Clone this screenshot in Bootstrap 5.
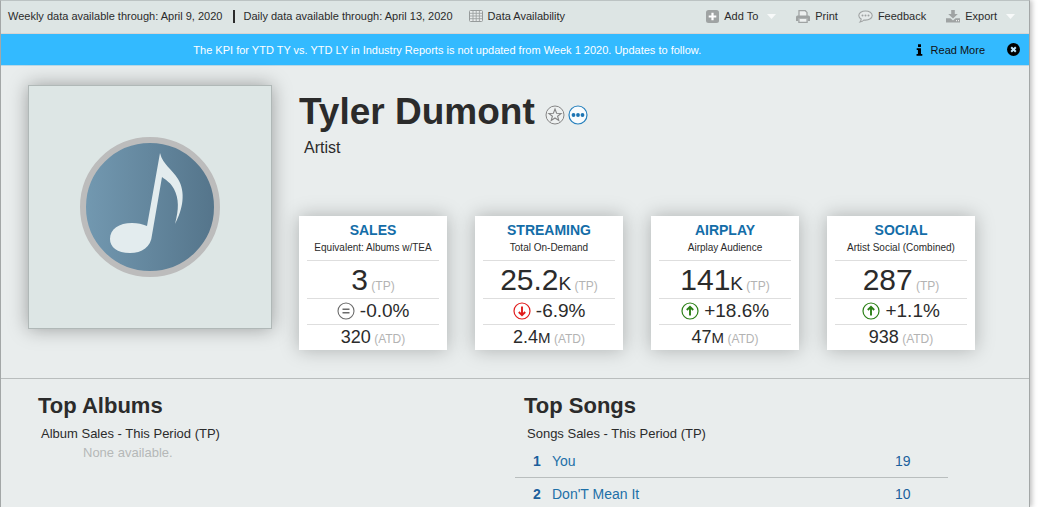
<!DOCTYPE html>
<html lang="en">
<head>
<meta charset="utf-8">
<meta name="viewport" content="width=device-width, initial-scale=1">
<title>Tyler Dumont – Artist</title>
<link href="https://cdn.jsdelivr.net/npm/bootstrap@5.3.0/dist/css/bootstrap.min.css" rel="stylesheet">
<style>
body{font-family:"Liberation Sans",Arial,sans-serif;font-size:11px;line-height:16px;color:#2b2b2b;background:#fff}
button{background:none;border:0;padding:0;color:inherit}
a{text-decoration:none}
.panel{margin-right:19px;background:#e9eded;border:1px solid #a3a7a7;border-top-color:#bcc3c3;border-bottom:0;box-shadow:2px 0 5px rgba(0,0,0,.25)}
.topbar{height:33px;padding:0 14px 2px 7px;background:#dde5e4;border-bottom:1px solid #d8d4d2}
.topbar nav{gap:20px}
.topbar .divide{width:2px;height:13px;background:#2b2b2b;margin:0 8px 0 11px}
.topbar .avail{margin-left:16px}
.tool{display:flex;align-items:center;gap:5px}
.caret{width:9px;height:5px;margin-left:4px}
.notice{height:32px;background:#33baff;border-bottom:1px solid #b9d8e6;color:#fff}
.notice .note{padding-right:22px}
.notice .tool{color:#111;gap:8px}
.closer{margin:0 9px 0 22px}
.hero{padding:19px 54px 28px 27px;gap:27px;border-bottom:1px solid #b9bdbd}
.cover{width:244px;height:244px;background:#dde6e5;border:1px solid #b0b8b7;box-shadow:0 0 18px rgba(0,0,0,.34)}
.title-row{padding-top:5px;gap:3px}
.artist-name{font-size:37px;line-height:44px;font-weight:700;margin:0}
.fav,.more{margin-top:6px}
.fav{margin-left:7px}
.kind{margin-top:4px;font-size:16px;line-height:20px;padding-left:5px}
.stats{display:grid;grid-template-columns:repeat(4,1fr);gap:28px;margin-top:58px}
.stat{background:#fff;padding:6px 8px 0;text-align:center;box-shadow:0 0 18px rgba(0,0,0,.26)}
.stat svg{vertical-align:-3px}
.stat h2{font-size:14px;line-height:16px;font-weight:700;color:#146da8;margin:0}
.stat .sub{font-size:10px;line-height:20px;height:22px;white-space:nowrap}
.stat .fig{border-top:1px solid #dedede;white-space:nowrap}
.stat .big{font-size:30px;line-height:37px;height:38px}
.stat .big small{font-size:19px}
.stat .mid{font-size:19px;line-height:24px;height:26px}
.stat .low{font-size:18px;line-height:24px;height:26px}
.stat .low small{font-size:15px}
.stat .tag{font-size:12px;color:#b3b3b3}
.lists{padding-top:13px}
.albums{padding-left:37px}
.songs-head{padding-left:9px}
.list-title{font-size:22px;line-height:28px;font-weight:700;margin:0}
.list-sub{font-size:13px;line-height:18px;margin-top:5px;padding-left:3px}
.none{font-size:13px;line-height:20px;color:#b5b8b8;padding-left:45px}
.songs{width:calc(100% - 81px);margin-top:2px;font-size:14px;line-height:18px;color:#1b5f9c}
.songs td{padding:7px 0}
.songs tr+tr td{border-top:1px solid #b9bebe;padding:7px 0 3px}
.songs td:first-child{width:37px;padding-left:18px;font-weight:700}
.songs td:last-child{width:53px}
.songs a{color:#1d70a8}
</style>
<script src="https://cdn.jsdelivr.net/npm/bootstrap@5.3.0/dist/js/bootstrap.bundle.min.js"></script>
</head>
<body>
<svg width="0" height="0" class="position-absolute" aria-hidden="true">
<symbol id="up" viewBox="0 0 18 18"><circle cx="9" cy="9" r="8" fill="none" stroke="#2c8017" stroke-width="1.2"/><path d="M9 13.5V5M5.8 8 9 4.8 12.2 8" fill="none" stroke="#2c8017" stroke-width="1.9"/></symbol>
<symbol id="down" viewBox="0 0 18 18"><circle cx="9" cy="9" r="8" fill="none" stroke="#e11b1b" stroke-width="1.2"/><path d="M9 4.5V13M5.8 10 9 13.2 12.2 10" fill="none" stroke="#e11b1b" stroke-width="1.9"/></symbol>
<symbol id="same" viewBox="0 0 18 18"><circle cx="9" cy="9" r="8" fill="none" stroke="#6b6b6b" stroke-width="1.1"/><path d="M5.5 7.2h7M5.5 10.7h7" stroke="#6b6b6b" stroke-width="1.5"/></symbol>
</svg>
<div class="panel min-vh-100">
  <header class="topbar d-flex align-items-center justify-content-between">
    <div class="d-flex align-items-center">
      <span>Weekly data available through: April 9, 2020</span>
      <span class="divide"></span>
      <span>Daily data available through: April 13, 2020</span>
      <a href="#" class="tool text-reset avail">
        <svg width="14" height="12" viewBox="0 0 14 12"><rect x=".5" y=".5" width="13" height="11" rx="1" fill="#e8ecec" stroke="#969b9b"/><path d="M1 3.3h12M1 6h12M1 8.7h12M4 1v10M7.2 1v10M10.4 1v10" stroke="#9da2a2" stroke-width=".9"/></svg>
        Data Availability</a>
    </div>
    <nav class="d-flex align-items-center">
      <button class="tool"><svg width="13" height="13" viewBox="0 0 13 13"><rect width="13" height="13" rx="2.5" fill="#9fa3a3"/><path d="M6.5 2.7v7.6M2.7 6.5h7.6" stroke="#fff" stroke-width="2.2"/></svg>Add To<svg class="caret" viewBox="0 0 9 5"><path d="M0 0h9L4.5 5z" fill="#f7f9f9"/></svg></button>
      <button class="tool"><svg width="14" height="13" viewBox="0 0 14 13"><path d="M3 6V.7h6.3L11 2.4V6" fill="#edf0f0" stroke="#9fa3a3" stroke-width="1.3"/><path d="M1.500 5.500h11q1.500 0 1.500 1.500v4h-2.200V8.800H2.200V11H0V7q0-1.500 1.500-1.500z" fill="#9fa3a3"/><path d="M2.900 9v3.300h8.200V9" fill="#edf0f0" stroke="#9fa3a3" stroke-width="1.3"/></svg>Print</button>
      <button class="tool"><svg width="15" height="13" viewBox="0 0 15 13"><path d="M7.500 1C3.800 1 .8 3 .8 5.500c0 1.500.9 2.700 2.400 3.500 0 1.200-.5 2.200-1.200 3 1.800-.2 3-.9 3.800-2 .5.100 1.100.1 1.700.1 3.700 0 6.700-2 6.700-4.600S11.200 1 7.500 1z" fill="#e6eaea" stroke="#9fa3a3" stroke-width="1.1"/><g fill="#9fa3a3"><circle cx="4.500" cy="5.500" r="1"/><circle cx="7.500" cy="5.500" r="1"/><circle cx="10.500" cy="5.500" r="1"/></g></svg>Feedback</button>
      <button class="tool"><svg width="14" height="13" viewBox="0 0 14 13"><path d="M5.200 0h3.600v4h3L7 8.600 2.200 4h3z" fill="#9fa3a3"/><path d="M0 8.300h4.500L7 10.500l2.500-2.200H14V12.500H0z" fill="#9fa3a3"/><path d="M10 10.700h1M12 10.700h1" stroke="#fff" stroke-width="1"/></svg>Export<svg class="caret" viewBox="0 0 9 5"><path d="M0 0h9L4.500 5z" fill="#f7f9f9"/></svg></button>
    </nav>
  </header>
  <div class="notice d-flex align-items-center">
    <div class="flex-grow-1 text-center note">The KPI for YTD TY vs. YTD LY in Industry Reports is not updated from Week 1 2020. Updates to follow.</div>
    <a href="#" class="tool"><svg width="7" height="12" viewBox="0 0 8 13"><path d="M2.300 0h3.400v3H2.300zM.8 4.500h4.900V11h1.500v2H.6v-2h1.600V6.500H.8z" fill="#000"/></svg>Read More</a>
    <button class="closer" aria-label="Close"><svg class="d-block" width="13" height="13" viewBox="0 0 13 13"><circle cx="6.500" cy="6.500" r="6.500" fill="#000"/><path d="M4.200 4.200l4.600 4.600M8.800 4.200L4.200 8.800" stroke="#bfe8ff" stroke-width="2"/></svg></button>
  </div>
  <main>
    <section class="hero d-flex align-items-start">
      <div class="cover flex-shrink-0 d-flex align-items-center justify-content-center">
        <svg width="140" height="140" viewBox="0 0 140 140" role="img" aria-label="Music note"><defs><linearGradient id="disc"><stop stop-color="#7399b1"/><stop offset="1" stop-color="#54748a"/></linearGradient></defs><circle cx="70" cy="70" r="67" fill="url(#disc)" stroke="#bcbcbc" stroke-width="6"/><path d="M80 16C83 28 92 32 98 42C106 55 103 72 95 87C99 72 99 62 94 52C91 46 86 43 82 40L72 98C71 110 62 116 50 116C37 116 30 110 30 102C30 92 39 86 52 86C58 86 62 87 67 89Z" fill="#e3ecee"/></svg>
      </div>
      <div class="flex-grow-1">
        <div class="d-flex align-items-center title-row">
          <h1 class="artist-name">Tyler Dumont</h1>
          <button class="fav" aria-label="Favorite"><svg class="d-block" width="20" height="20" viewBox="0 0 20 20"><circle cx="10" cy="10" r="9" fill="#eef1f1" stroke="#858585"/><path d="M10 4l1.600 4.200 4.500.2-3.500 2.800 1.200 4.300L10 13l-3.800 2.500 1.200-4.300-3.500-2.800 4.500-.2z" fill="none" stroke="#858585" stroke-width="1.1"/></svg></button>
          <button class="more" aria-label="More"><svg class="d-block" width="20" height="20" viewBox="0 0 20 20"><circle cx="10" cy="10" r="9" fill="#f8fbfd" stroke="#2680bd" stroke-width="1.2"/><g fill="#1b74b3"><circle cx="5.500" cy="10" r="1.900"/><circle cx="10" cy="10" r="1.900"/><circle cx="14.500" cy="10" r="1.900"/></g></svg></button>
        </div>
        <div class="kind">Artist</div>
        <div class="stats">
          <article class="stat"><h2>SALES</h2><div class="sub">Equivalent: Albums w/TEA</div>
            <div class="fig big">3<span class="tag"> (TP)</span></div>
            <div class="fig mid"><svg width="18" height="18"><use href="#same"/></svg> -0.0%</div>
            <div class="fig low">320<span class="tag"> (ATD)</span></div></article>
          <article class="stat"><h2>STREAMING</h2><div class="sub">Total On-Demand</div>
            <div class="fig big">25.2<small>K</small><span class="tag"> (TP)</span></div>
            <div class="fig mid"><svg width="18" height="18"><use href="#down"/></svg> -6.9%</div>
            <div class="fig low">2.4<small>M</small><span class="tag"> (ATD)</span></div></article>
          <article class="stat"><h2>AIRPLAY</h2><div class="sub">Airplay Audience</div>
            <div class="fig big">141<small>K</small><span class="tag"> (TP)</span></div>
            <div class="fig mid"><svg width="18" height="18"><use href="#up"/></svg> +18.6%</div>
            <div class="fig low">47<small>M</small><span class="tag"> (ATD)</span></div></article>
          <article class="stat"><h2>SOCIAL</h2><div class="sub">Artist Social (Combined)</div>
            <div class="fig big">287<span class="tag"> (TP)</span></div>
            <div class="fig mid"><svg width="18" height="18"><use href="#up"/></svg> +1.1%</div>
            <div class="fig low">938<span class="tag"> (ATD)</span></div></article>
        </div>
      </div>
    </section>
    <div class="row g-0 lists">
      <section class="col-6 albums">
        <h2 class="list-title">Top Albums</h2>
        <div class="list-sub">Album Sales - This Period (TP)</div>
        <div class="none">None available.</div>
      </section>
      <section class="col-6">
        <div class="songs-head"><h2 class="list-title">Top Songs</h2>
        <div class="list-sub">Songs Sales - This Period (TP)</div></div>
        <table class="songs"><tbody>
          <tr><td>1</td><td><a href="#">You</a></td><td>19</td></tr>
          <tr><td>2</td><td><a href="#">Don'T Mean It</a></td><td>10</td></tr>
        </tbody></table>
      </section>
    </div>
  </main>
</div>
</body>
</html>
